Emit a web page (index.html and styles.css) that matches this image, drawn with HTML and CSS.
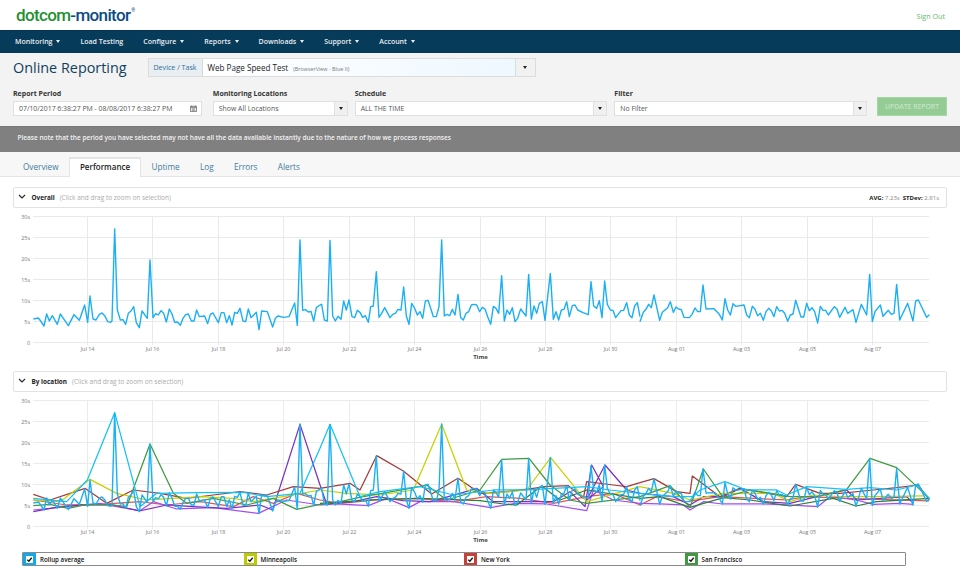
FILE: index.html
```html
<!DOCTYPE html>
<html lang="en">
<head>
<meta charset="utf-8">
<title>Online Reporting</title>
<link rel="stylesheet" href="styles.css">
</head>
<body>
<header class="top">
  <div class="logo"><span class="logo-a">dotcom</span><span class="logo-b">-monitor</span><sup class="logo-r">®</sup></div>
  <a class="signout">Sign Out</a>
</header>
<nav class="nav">
  <a>Monitoring<i class="caret"></i></a>
  <a>Load Testing</a>
  <a>Configure<i class="caret"></i></a>
  <a>Reports<i class="caret"></i></a>
  <a>Downloads<i class="caret"></i></a>
  <a>Support<i class="caret"></i></a>
  <a>Account<i class="caret"></i></a>
</nav>
<section class="toolbar">
  <div class="title-row">
    <h1>Online Reporting</h1>
    <div class="device">
      <span class="device-label">Device / Task</span>
      <span class="device-value">Web Page Speed Test<small>(BrowserView - Blue II)</small></span>
      <span class="device-btn"><i class="caret dark"></i></span>
    </div>
  </div>
  <div class="filters">
    <div class="field f-period">
      <label>Report Period</label>
      <div class="control"><span class="val">07/10/2017 6:38:27 PM - 08/08/2017 6:38:27 PM</span>
        <svg class="cal" viewBox="0 0 8 8"><path d="M.5 1.5h7v6h-7zM.5 3h7M2 .5v1.5M6 .5v1.5M2 4.5h4M2 6h4" fill="none" stroke="#555" stroke-width=".8"/></svg>
      </div>
    </div>
    <div class="field f-loc">
      <label>Monitoring Locations</label>
      <div class="control"><span class="val">Show All Locations</span><span class="drop"><i class="caret dark"></i></span></div>
    </div>
    <div class="field f-wide">
      <label>Schedule</label>
      <div class="control"><span class="val">ALL THE TIME</span><span class="drop"><i class="caret dark"></i></span></div>
    </div>
    <div class="field f-wide f-filter">
      <label>Filter</label>
      <div class="control"><span class="val">No Filter</span><span class="drop"><i class="caret dark"></i></span></div>
    </div>
    <button class="update">UPDATE REPORT</button>
  </div>
</section>
<div class="notice">Please note that the period you have selected may not have all the data available instantly due to the nature of how we process responses</div>
<div class="tabs">
  <a>Overview</a>
  <a class="active">Performance</a>
  <a>Uptime</a>
  <a>Log</a>
  <a>Errors</a>
  <a>Alerts</a>
</div>
<main>
  <div class="panel first">
    <svg class="chev" viewBox="0 0 8 5"><path d="M1 1l3 3 3-3" fill="none" stroke="#222" stroke-width="1.1"/></svg>
    <b>Overall</b><span class="hint">(Click and drag to zoom on selection)</span>
    <span class="stats"><b>AVG:</b> 7.23s &nbsp;<b>STDev:</b> 2.81s</span>
  </div>
  <svg class="chart c1" viewBox="0 208 960 163">
    <path class="grid" d="M33 216.5H929M33 237.5H929M33 258.5H929M33 279.5H929M33 300.5H929M33 321.5H929M33 342.5H929M87.5 216V345M152.5 216V345M218.5 216V345M283.5 216V345M349.5 216V345M414.5 216V345M480.5 216V345M545.5 216V345M610.5 216V345M676.5 216V345M741.5 216V345M807.5 216V345M872.5 216V345"/>
    <g class="ylab"><text x="30" y="218.5">30s</text><text x="30" y="239.5">25s</text><text x="30" y="260.5">20s</text><text x="30" y="281.5">15s</text><text x="30" y="302.5">10s</text><text x="30" y="323.5">5s</text><text x="30" y="344.5">0</text></g>
    <g class="xlab"><text x="87.5" y="350.5">Jul 14</text><text x="152.5" y="350.5">Jul 16</text><text x="218.5" y="350.5">Jul 18</text><text x="283.5" y="350.5">Jul 20</text><text x="349.5" y="350.5">Jul 22</text><text x="414.5" y="350.5">Jul 24</text><text x="480.5" y="350.5">Jul 26</text><text x="545.5" y="350.5">Jul 28</text><text x="610.5" y="350.5">Jul 30</text><text x="676.5" y="350.5">Aug 01</text><text x="741.5" y="350.5">Aug 03</text><text x="807.5" y="350.5">Aug 05</text><text x="872.5" y="350.5">Aug 07</text></g>
    <text class="axis-title" x="480.5" y="358.5">Time</text>
    <g id="rollup" class="trace s-roll">
      <polyline transform="translate(0 185) scale(.33333)" points="100,402 115,399 122,408 132,423 140,387 148,408 157,392 172,418 181,387 190,400 205,422 222,389 238,406 254,360 263,412 270,333 279,402 288,405 298,388 306,384 314,392 323,410 332,412 336,408 344,132 352,375 361,405 369,404 377,418 385,385 393,378 401,365 409,413 418,428 426,378 442,400 450,225 459,398 467,386 475,390 483,377 491,385 499,411 508,372 516,387 524,412 532,411 541,421 549,400 557,389 565,387 574,408 582,408 590,375 598,395 614,393 623,416 631,388 639,384 655,413 664,383 672,383 680,413 688,392 696,420 704,382 712,385 720,370 729,408 737,410 745,372 753,398 769,382 777,434 785,378 802,380 818,426 826,400 834,393 851,397 867,395 884,354 892,421 900,165 908,376 916,374 925,381 933,379 941,408 949,368 960,360"/>
      <polyline transform="translate(320 205) scale(.33333)" points="0,300 5,298 13,345 22,348 30,106 38,333 46,348 54,334 63,343 71,288 79,315 87,285 96,335 104,338 112,316 120,322 128,337 136,332 145,352 152,305 160,303 169,200 177,337 185,325 194,308 210,338 218,328 226,325 234,313 243,315 251,246 259,333 267,358 275,295 284,310 292,330 300,320 308,340 316,288 324,286 332,310 340,335 349,335 357,305 365,105 373,333 381,328 389,332 397,313 405,330 414,268 422,338 430,345 438,325 446,320 454,300 462,298 470,300 479,320 487,307 495,312 503,335 512,358 520,304 528,310 536,325 545,212 553,348 561,315 569,328 577,308 585,350 593,340 602,312 618,333 626,208 634,342 642,303 650,325 658,295 667,290 675,346 691,205 700,343 708,320 716,345 724,315 732,313 740,290 748,335 757,302 765,300 773,315 789,323 805,329 813,230 821,303 830,310 838,287 846,338 854,228 862,298 871,315 879,316 887,338 903,317 911,316 920,293 928,330 936,338 944,303 952,293 960,335"/>
      <polyline transform="translate(640 205) scale(.33333)" points="0,350 10,322 18,313 26,298 34,308 42,270 59,346 67,322 83,308 91,290 100,322 108,306 116,312 124,314 132,337 148,338 156,328 165,309 173,320 181,320 189,240 198,312 222,311 238,328 247,345 255,281 263,315 271,330 279,296 287,304 312,300 320,330 328,338 337,304 345,313 353,332 361,325 370,346 378,320 386,310 394,318 402,335 410,305 418,318 426,316 434,325 443,349 451,330 459,327 467,286 483,336 491,336 500,295 508,317 516,308 524,320 533,354 541,304 549,316 557,316 565,330 583,305 591,312 599,337 615,307 623,325 639,314 648,352 664,298 680,330 689,208 697,350 705,320 721,300 729,334 745,316 754,328 762,325 770,238 779,345 803,295 819,348 827,288 835,285 860,337 868,329"/>
    </g>
  </svg>
  <div class="panel">
    <svg class="chev" viewBox="0 0 8 5"><path d="M1 1l3 3 3-3" fill="none" stroke="#222" stroke-width="1.1"/></svg>
    <b>By location</b><span class="hint">(Click and drag to zoom on selection)</span>
  </div>
  <svg class="chart c2" viewBox="0 392 960 160">
    <path class="grid g2" d="M33 400.5H929M33 421.5H929M33 442.5H929M33 463.5H929M33 484.5H929M33 505.5H929M33 526.5H929M87.5 400V529M152.5 400V529M218.5 400V529M283.5 400V529M349.5 400V529M414.5 400V529M480.5 400V529M545.5 400V529M610.5 400V529M676.5 400V529M741.5 400V529M807.5 400V529M872.5 400V529"/>
    <g class="ylab"><text x="30" y="402.5">30s</text><text x="30" y="423.5">25s</text><text x="30" y="444.5">20s</text><text x="30" y="465.5">15s</text><text x="30" y="486.5">10s</text><text x="30" y="507.5">5s</text><text x="30" y="528.5">0</text></g>
    <g class="xlab"><text x="87.5" y="534">Jul 14</text><text x="152.5" y="534">Jul 16</text><text x="218.5" y="534">Jul 18</text><text x="283.5" y="534">Jul 20</text><text x="349.5" y="534">Jul 22</text><text x="414.5" y="534">Jul 24</text><text x="480.5" y="534">Jul 26</text><text x="545.5" y="534">Jul 28</text><text x="610.5" y="534">Jul 30</text><text x="676.5" y="534">Aug 01</text><text x="741.5" y="534">Aug 03</text><text x="807.5" y="534">Aug 05</text><text x="872.5" y="534">Aug 07</text></g>
    <text class="axis-title" x="480.5" y="542">Time</text>
    <g transform="translate(0 365) scale(.33333)">
      <polyline class="trace s-lred" points="100,405 200,420 300,418 420,410 500,420 600,410 700,425 760,395 820,415 890,385 960,405"/>
      <polyline class="trace s-lpur" points="100,435 200,425 300,415 350,425 420,437 460,410 530,432 640,428 775,445 860,405 960,420"/>
      <polyline class="trace s-purp" points="100,440 180,425 260,420 340,420 418,438 500,420 580,425 680,430 780,420 818,435 900,178 960,360"/>
      <polyline class="trace s-red" points="100,388 150,405 210,385 255,370 320,415 400,375 480,385 560,400 640,390 720,380 800,390 880,365 960,370"/>
      <polyline class="trace s-yel" points="100,405 180,410 270,343 350,385 440,405 520,400 600,395 700,400 760,410 850,395 960,375"/>
      <polyline class="trace s-grn" points="100,422 150,418 205,430 260,418 340,420 380,425 450,237 520,385 560,415 640,400 740,420 820,400 890,433 960,418"/>
      <polyline class="trace s-cyan" points="100,400 200,410 262,345 344,143 420,425 470,385 590,383 730,382 800,395 900,385 960,250"/>
    </g>
    <g transform="translate(320 390) scale(.33333)">
      <polyline class="trace s-lred" points="0,330 60,340 170,330 290,325 400,335 500,320 600,325 700,340 800,320 880,310 960,345"/>
      <polyline class="trace s-lpur" points="0,345 50,342 145,347 200,325 267,353 300,335 400,335 512,353 585,340 680,342 800,362 820,300 880,330 960,340"/>
      <polyline class="trace s-purp" points="0,285 20,342 100,335 170,320 250,332 330,335 420,310 470,295 520,335 600,335 700,335 750,305 795,350 815,225 850,290 800,330 855,225 920,300 960,310"/>
      <polyline class="trace s-red" points="0,295 90,280 120,300 170,197 250,243 335,312 414,265 480,310 560,305 640,295 675,290 745,287 790,325 800,275 880,285 920,290 960,278"/>
      <polyline class="trace s-yel" points="0,300 80,310 180,315 280,300 365,103 440,300 520,310 620,300 692,203 800,335 960,290"/>
      <polyline class="trace s-grn" points="0,343 60,335 130,320 270,295 320,285 380,330 480,300 545,208 627,205 690,285 750,330 800,340 960,320"/>
      <polyline class="trace s-dgrn" points="0,340 150,330 300,325 480,332 550,342 590,345 665,288 720,330 800,300 960,325"/>
      <polyline class="trace s-cyan" points="0,175 30,103 120,320 180,305 300,290 400,315 520,300 620,300 800,290 870,300 960,310"/>
    </g>
    <g transform="translate(640 390) scale(.33333)">
      <polyline class="trace s-lred" points="0,345 50,320 140,335 240,320 440,330 500,320 620,325 868,333"/>
      <polyline class="trace s-lpur" points="0,340 60,342 130,345 150,360 190,335 247,342 370,342 443,345 533,350 570,320 648,330 700,343 780,340 820,343"/>
      <polyline class="trace s-purp" points="0,310 100,320 150,345 190,320 250,320 300,295 370,335 450,340 530,320 620,300 650,330 800,320 820,340"/>
      <polyline class="trace s-red" points="0,278 42,266 110,305 150,310 157,258 240,320 300,295 440,320 467,283 540,310 600,310 700,300 770,293 835,285 868,330"/>
      <polyline class="trace s-yel" points="0,290 100,310 150,330 250,310 400,310 450,335 520,315 600,320 700,320 850,318"/>
      <polyline class="trace s-dgrn" points="0,325 60,320 150,352 250,323 330,330 450,348 580,325 648,348 710,335 868,325"/>
      <polyline class="trace s-grn" points="0,320 90,287 150,352 190,237 250,323 330,300 450,320 530,320 620,298 690,205 770,233 868,325"/>
      <polyline class="trace s-cyan" points="0,310 100,320 160,320 180,300 255,275 320,300 410,300 440,315 500,290 620,298 690,293 770,300 830,285 868,325"/>
    </g>
    <use href="#rollup" transform="translate(0 184)"/>
  </svg>
  <ul class="legend">
    <li><span class="swatch sw-blue"><i class="box"><svg viewBox="0 0 8 8"><path d="M1.5 4.2l1.8 1.8 3.2-4" fill="none" stroke="#111" stroke-width="1.5"/></svg></i></span>Rollup average</li>
    <li><span class="swatch sw-yel"><i class="box"><svg viewBox="0 0 8 8"><path d="M1.5 4.2l1.8 1.8 3.2-4" fill="none" stroke="#111" stroke-width="1.5"/></svg></i></span>Minneapolis</li>
    <li><span class="swatch sw-red"><i class="box"><svg viewBox="0 0 8 8"><path d="M1.5 4.2l1.8 1.8 3.2-4" fill="none" stroke="#111" stroke-width="1.5"/></svg></i></span>New York</li>
    <li><span class="swatch sw-grn"><i class="box"><svg viewBox="0 0 8 8"><path d="M1.5 4.2l1.8 1.8 3.2-4" fill="none" stroke="#111" stroke-width="1.5"/></svg></i></span>San Francisco</li>
  </ul>
</main>
</body>
</html>
```

FILE: styles.css
```css
* { box-sizing: border-box; }
html, body { margin: 0; padding: 0; }
body {
  width: 960px;
  height: 569px;
  overflow: hidden;
  background: #fff;
  font-family: "Open Sans", "Noto Sans", sans-serif;
  color: #333;
}
a { cursor: pointer; }

.top {
  height: 30px;
  display: flex;
  align-items: center;
  justify-content: space-between;
  padding: 0 15px 0 16px;
}
.logo {
  font-family: "Roboto", sans-serif;
  font-size: 17px;
  font-weight: 500;
  letter-spacing: -0.65px;
  line-height: 1;
  display: flex;
}
.logo-a { color: #1f9130; }
.logo-b { color: #0c4c83; }
.logo-r { color: #0c4c83; font-size: 5px; font-weight: 400; margin: 1px 0 0 1px; }
.signout { font-size: 7.2px; color: #63b96b; margin-top: 1px; }

.nav {
  height: 23px;
  background: #073b5a;
  border-top: 1px solid #05324f;
  display: flex;
  align-items: center;
  gap: 20px;
  padding: 0 0 2px 15px;
  font-size: 7px;
  font-weight: 600;
  color: #e9eef2;
}
.caret {
  display: inline-block;
  width: 0;
  height: 0;
  margin-left: 4px;
  vertical-align: middle;
  border-left: 2.5px solid transparent;
  border-right: 2.5px solid transparent;
  border-top: 3px solid #e9eef2;
}
.caret.dark { border-top-color: #222; margin: 0; }

.toolbar {
  height: 73px;
  background: #f3f3f3;
  padding: 5px 13px 0;
}
.title-row { display: flex; align-items: center; height: 19px; }
h1 {
  margin: 0;
  width: 134.5px;
  font-size: 14.4px;
  font-weight: 400;
  color: #103f5f;
  line-height: 19px;
}
.device {
  width: 388px;
  height: 19px;
  display: flex;
  border: 1px solid #dcdcdc;
  background: #fff;
}
.device-label {
  width: 54px;
  background: #e9eef2;
  border-right: 1px solid #d4dbe0;
  color: #2d6f96;
  font-size: 7.1px;
  line-height: 17px;
  text-align: center;
}
.device-value {
  flex: 1;
  padding-left: 5px;
  background: linear-gradient(90deg, #fff 0%, #eef8ff 100%);
  font-size: 8.1px;
  line-height: 17px;
  color: #222;
}
.device-value small { font-size: 5.4px; color: #777; margin-left: 5px; }
.device-btn {
  width: 20px;
  border-left: 1px solid #dcdcdc;
  background: #f1f1f1;
  display: flex;
  align-items: center;
  justify-content: center;
}

.filters { display: flex; align-items: flex-end; margin-top: 11px; }
.field { display: flex; flex-direction: column; }
.field label { font-size: 7px; font-weight: 700; color: #333; line-height: 11px; margin-bottom: 2px; }
.f-period { width: 189px; margin-right: 11px; }
.f-loc { width: 135px; margin-right: 7px; }
.f-wide { width: 253px; margin-right: 7px; }
.f-filter { margin-right: 10px; }
.control {
  height: 15px;
  display: flex;
  align-items: center;
  background: #fff;
  border: 1px solid #e0e0e0;
  font-size: 6.9px;
  color: #555;
}
.val { flex: 1; padding-left: 5px; white-space: nowrap; }
.cal { width: 7px; height: 7px; margin-right: 4px; }
.drop {
  width: 13px;
  height: 100%;
  border-left: 1px solid #e0e0e0;
  background: #f0f0f0;
  display: flex;
  align-items: center;
  justify-content: center;
}
.update {
  width: 70px;
  height: 19px;
  padding: 0;
  border: 1px solid #a3d8a3;
  background: #95cc95;
  color: #c4e4c4;
  font: 600 6.8px "Open Sans", sans-serif;
}

.notice {
  height: 26px;
  background: #808080;
  border-top: 1px solid #777;
  padding: 5px 0 0 17.5px;
  font-size: 6.5px;
  font-weight: 600;
  line-height: 11px;
  color: #f2f2f2;
  white-space: nowrap;
}

.tabs {
  height: 25px;
  background: #f7f7f7;
  border-bottom: 1px solid #e4e4e4;
  display: flex;
  align-items: flex-end;
  padding-left: 13px;
  font-size: 8.2px;
  color: #3f7ca0;
}
.tabs a { padding: 0 10px; line-height: 19px; height: 19px; margin-right: 0.4px; }
.tabs a.active {
  background: #fff;
  color: #222;
  font-weight: 600;
  font-size: 8px;
  border: 1px solid #e4e4e4;
  border-bottom: none;
  border-top-width: 2px;
  line-height: 16px;
  height: 20px;
  margin-bottom: -1px;
}

main { display: block; }
.panel {
  position: relative;
  height: 21px;
  margin: 0 13px;
  padding-left: 17.5px;
  display: flex;
  align-items: center;
  border: 1px solid #e2e2e2;
  border-radius: 2px;
  background: #fff;
  font-size: 6.4px;
  color: #222;
}
.panel.first { margin-top: 10px; }
.chev { position: absolute; left: 4px; top: 6px; width: 8px; height: 5px; }
.hint { color: #aaa; margin-left: 5px; font-size: 6.5px; }
.stats { margin-left: auto; margin-right: 7px; font-size: 6px; color: #888; }
.stats b { color: #222; }

.chart { display: block; width: 960px; }
.c1 { height: 163px; }
.c2 { height: 160px; }
.grid { fill: none; stroke: #e9e9e9; stroke-width: 1; }
.g2 { stroke: #ebebeb; }
.ylab text { font-size: 5.4px; fill: #777; text-anchor: end; }
.xlab text { font-size: 5.4px; fill: #777; text-anchor: middle; }
.axis-title { font-size: 6px; font-weight: 700; fill: #444; text-anchor: middle; }
.trace, .trace polyline { fill: none; stroke-width: 1.4; stroke-linejoin: round; }
.trace polyline, polyline.trace { vector-effect: non-scaling-stroke; }
polyline.trace { stroke-width: 1.25; }
.s-roll { stroke: #1ab0f5; }
.s-cyan { stroke: #12c3f7; }
.s-lred { stroke: #dd5a55; }
.s-lpur { stroke: #a44df0; }
.s-purp { stroke: #7a30c4; }
.s-red { stroke: #a63a3a; }
.s-yel { stroke: #c6d200; }
.s-grn { stroke: #3f9a40; }
.s-dgrn { stroke: #2f7d3a; }

.legend {
  list-style: none;
  margin: 0 0 0 22px;
  padding: 0;
  width: 884px;
  height: 14px;
  display: grid;
  grid-template-columns: repeat(4, 1fr);
  border: 1px solid #8a8a8a;
  border-radius: 1px;
  background: #fff;
}
.legend li {
  display: flex;
  align-items: center;
  font-size: 6.2px;
  font-weight: 600;
  color: #111;
}
.swatch {
  width: 13px;
  height: 100%;
  margin-right: 4px;
  display: flex;
  align-items: center;
  justify-content: center;
}
.sw-blue { background: #12a9ec; }
.sw-yel { background: #bccb00; }
.sw-red { background: #c4423a; }
.sw-grn { background: #3f9a40; }
.box { width: 7px; height: 7px; background: #fff; display: block; }
.box svg { display: block; width: 7px; height: 7px; }
```
